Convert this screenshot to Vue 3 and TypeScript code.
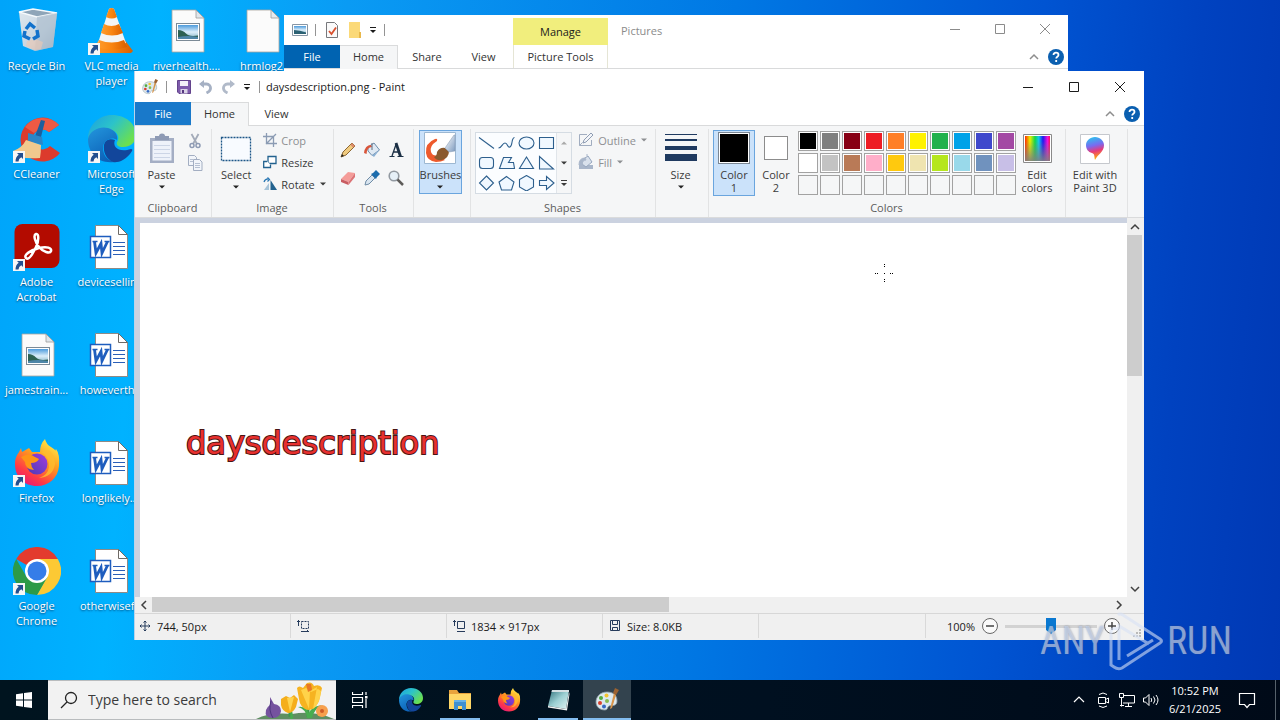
<script setup lang="ts">
import { ref } from 'vue'

interface DesktopItem {
  label: string
  icon: string
  shortcut?: boolean
}

const desktopColumns: DesktopItem[][] = [
  [
    { label: 'Recycle Bin', icon: 'bin' },
    { label: 'CCleaner', icon: 'ccleaner', shortcut: true },
    { label: 'Adobe Acrobat', icon: 'acrobat', shortcut: true },
    { label: 'jamestrain...', icon: 'picture-file' },
    { label: 'Firefox', icon: 'firefox', shortcut: true },
    { label: 'Google Chrome', icon: 'chrome', shortcut: true },
  ],
  [
    { label: 'VLC media player', icon: 'vlc', shortcut: true },
    { label: 'Microsoft Edge', icon: 'edge', shortcut: true },
    { label: 'devicesellin...', icon: 'word-file' },
    { label: 'howeverth...', icon: 'word-file' },
    { label: 'longlikely....', icon: 'word-file' },
    { label: 'otherwisef...', icon: 'word-file' },
  ],
  [{ label: 'riverhealth....', icon: 'picture-file' }],
  [{ label: 'hrmlog2', icon: 'blank-file' }],
]

const palette: string[] = [
  '#000000', '#7f7f7f', '#880015', '#ed1c24', '#ff7f27', '#fff200', '#22b14c', '#00a2e8', '#3f48cc', '#a349a4',
  '#ffffff', '#c3c3c3', '#b97a57', '#ffaec9', '#ffc90e', '#efe4b0', '#b5e61d', '#99d9ea', '#7092be', '#c8bfe7',
  '', '', '', '', '', '', '', '', '', '',
]

const shapes = [
  { name: 'Line', d: 'M2 2.5 17 13.5' },
  { name: 'Curve', d: 'M1.5 13C5 13 5 8 8 8s2 5 5 4c3-1.5 1-9 4.5-9.5' },
  { name: 'Oval', d: 'M2 8a7.5 6 0 1 0 15 0a7.5 6 0 1 0-15 0z' },
  { name: 'Rectangle', d: 'M2.5 2.5h14v11h-14z' },
  { name: 'Rounded rectangle', d: 'M5.5 2.5h8q3 0 3 3v5q0 3-3 3h-8q-3 0-3-3v-5q0-3 3-3z' },
  { name: 'Polygon', d: 'M6.5 2.5h8l-3 5h5l1 6h-15z' },
  { name: 'Triangle', d: 'M9.5 2 16.5 13.5h-14z' },
  { name: 'Right triangle', d: 'M2.5 1.5v12.5h14z' },
  { name: 'Diamond', d: 'M9.5 1 16.5 8l-7 7-7-7z' },
  { name: 'Pentagon', d: 'M9.5 1.5l7.5 5.5-2.5 8h-10L2 7z' },
  { name: 'Hexagon', d: 'M9.5.5l7 4v7.5l-7 4-7-4V4.5z' },
  { name: 'Right arrow', d: 'M2.5 5.5h7v-4l7.5 6.5-7.5 6.5v-4h-7z' },
]

const tools = ['Pencil', 'Fill with color', 'Text', 'Eraser', 'Color picker', 'Magnifier']

const pinned = [
  { name: 'Microsoft Edge', icon: 'edge', state: '' },
  { name: 'File Explorer', icon: 'folder', state: 'open' },
  { name: 'Firefox', icon: 'firefox', state: '' },
  { name: 'Notepad', icon: 'notepad', state: 'open' },
  { name: 'Paint', icon: 'paint', state: 'open active' },
]

const zoom = ref(50)
const search = ref('')
</script>

<template>
  <div class="screen">
    <svg class="sprite" aria-hidden="true">
      <defs>
        <linearGradient id="g-edge1" x1="0" y1="0" x2="1" y2="0.6">
          <stop offset="0" stop-color="#1c9fe2" /><stop offset="0.5" stop-color="#2cc3c9" /><stop offset="1" stop-color="#6be04f" />
        </linearGradient>
        <linearGradient id="g-edge2" x1="0" y1="0" x2="0.5" y2="1">
          <stop offset="0" stop-color="#2396dd" /><stop offset="1" stop-color="#0d62b8" />
        </linearGradient>
        <linearGradient id="g-fox" x1="0.8" y1="0" x2="0.2" y2="1">
          <stop offset="0" stop-color="#fff04a" /><stop offset="0.4" stop-color="#ff9a1f" /><stop offset="0.75" stop-color="#ff3a46" /><stop offset="1" stop-color="#e3147f" />
        </linearGradient>
        <linearGradient id="g-foxglobe" x1="0" y1="1" x2="1" y2="0">
          <stop offset="0" stop-color="#4a3bb5" /><stop offset="1" stop-color="#a13be0" />
        </linearGradient>
        <linearGradient id="g-sky" x1="0" y1="0" x2="0" y2="1">
          <stop offset="0" stop-color="#4d9bdc" /><stop offset="0.5" stop-color="#dceefa" /><stop offset="1" stop-color="#7fb0c4" />
        </linearGradient>
        <linearGradient id="g-bin" x1="0" y1="0" x2="1" y2="1">
          <stop offset="0" stop-color="#dfe8ef" /><stop offset="0.6" stop-color="#c6d4e0" /><stop offset="1" stop-color="#93a6b8" />
        </linearGradient>
        <linearGradient id="g-cone" x1="0" y1="0" x2="1" y2="0">
          <stop offset="0" stop-color="#ff9d2e" /><stop offset="0.5" stop-color="#f98410" /><stop offset="1" stop-color="#d95f00" />
        </linearGradient>
        <linearGradient id="g-rainbow" x1="0" y1="0" x2="1" y2="0">
          <stop offset="0" stop-color="#ff2a00" /><stop offset="0.2" stop-color="#e8f000" /><stop offset="0.4" stop-color="#12d44a" />
          <stop offset="0.55" stop-color="#10c8f0" /><stop offset="0.72" stop-color="#2018f0" /><stop offset="0.9" stop-color="#f010d8" /><stop offset="1" stop-color="#ff1050" />
        </linearGradient>
        <linearGradient id="g-grayfade" x1="0" y1="0" x2="0" y2="1">
          <stop offset="0.2" stop-color="#808080" stop-opacity="0" /><stop offset="1" stop-color="#808080" stop-opacity="0.9" />
        </linearGradient>
        <linearGradient id="g-p3d" x1="0.2" y1="0" x2="0.4" y2="1">
          <stop offset="0" stop-color="#27c7ef" /><stop offset="0.4" stop-color="#7a6af0" /><stop offset="0.65" stop-color="#e83a78" /><stop offset="1" stop-color="#ffb300" />
        </linearGradient>
        <linearGradient id="g-brush" x1="0" y1="0" x2="1" y2="1">
          <stop offset="0" stop-color="#ffffff" /><stop offset="1" stop-color="#7f9cc0" />
        </linearGradient>
        <linearGradient id="g-note" x1="0" y1="0" x2="1" y2="1">
          <stop offset="0" stop-color="#2f6f7a" /><stop offset="0.5" stop-color="#9ccfd3" /><stop offset="1" stop-color="#e4f3f3" />
        </linearGradient>
      </defs>

      <symbol id="bin" viewBox="0 0 48 48">
        <path d="M6 5 20 2 44 6 40 40 22 44 10 39z" fill="url(#g-bin)" />
        <path d="M6 5 20 2 44 6 24 10z" fill="#8fa5b8" stroke="#f5f9fc" stroke-width="1.5" />
        <path d="M24 10 22 44 40 40 44 6z" fill="#aebfce" fill-opacity="0.7" />
        <path d="M14 34l8-2 8 3-2 7-6 1-9-4z" fill="#f0c8b0" fill-opacity="0.6" />
        <g fill="none" stroke="#1272cc" stroke-width="3.5">
          <path d="M13 22l4-5 5 4" /><path d="M24 23l1 6-5 3" /><path d="M17 32l-6-3 1-5" />
        </g>
      </symbol>

      <symbol id="ccleaner" viewBox="0 0 48 48">
        <path d="M46 10A22 22 0 1 0 47 38L37 31A10 10 0 1 1 36 17z" fill="#dc3b2c" />
        <path d="M46 10A22 22 0 0 0 12 12l9 6a11 11 0 0 1 15-1z" fill="#ee5a44" />
        <path d="M28 5l4 1-5 20-6-2z" fill="#1d5f9e" />
        <path d="M15 18l14 4 1 8-15-4z" fill="#2c86c7" />
        <path d="M13 25l15 5q0 8-1 13Q6 45 0 36q9-3 13-11z" fill="#f1c98e" />
      </symbol>

      <symbol id="acrobat" viewBox="0 0 48 48">
        <rect x="1.5" y="1" width="45" height="44" rx="8" fill="#b30b00" />
        <path d="M13 35c-3-3 5-8 13-10s13 0 12 3-8 1-12-4-6-12-3-13 3 7 0 13-7 14-10 11z" fill="none" stroke="#fff" stroke-width="2.5" />
      </symbol>

      <symbol id="picture-file" viewBox="0 -1 48 48">
        <path d="M9 2h24l8 8v34H9z" fill="#fbfbfb" stroke="#aaa49e" stroke-width="0.8" />
        <path d="M33 2v8h8z" fill="#dfe6ec" stroke="#9c9c9c" stroke-width="0.8" />
        <rect x="13.5" y="15.5" width="23" height="17" fill="#fff" stroke="#7c8a96" />
        <rect x="15" y="17" width="20" height="14" fill="url(#g-sky)" />
        <path d="M15 22q5 0 8 3.5t12 2V31H15z" fill="#2d6152" />
        <path d="M15 29q10-2 20 0v2H15z" fill="#4e86a8" />
      </symbol>

      <symbol id="blank-file" viewBox="0 -1 48 48">
        <path d="M9 2h24l8 8v34H9z" fill="#fbfbfb" stroke="#aaa49e" stroke-width="0.8" />
        <path d="M33 2v8h8z" fill="#e8eaec" stroke="#9c9c9c" stroke-width="0.8" />
      </symbol>

      <symbol id="word-file" viewBox="1 -1 48 48">
        <path d="M8.5 1.5h23l9 9v34h-32z" fill="#fff" stroke="#8e8a86" />
        <path d="M31.5 1.5v9h9z" fill="#fff" stroke="#6e6a66" />
        <path d="M26 18.5h12M26 22.5h12M26 26.5h12M26 30.5h12" stroke="#2b5fb8" />
        <rect x="3.5" y="12.5" width="20" height="21" fill="#fff" stroke="#1e5dbe" stroke-width="1.5" />
        <path d="M7.5 17.5 9 29l5-9.5L15 29l5.5-11.5" fill="none" stroke="#1e5dbe" stroke-width="2.8" />
        <path d="M5.5 17.5h5M17.5 17.5h5" stroke="#1e5dbe" stroke-width="1.5" />
      </symbol>

      <symbol id="firefox" viewBox="0 0 48 48">
        <path d="M24 47C11 47 2 38 2 25c0-6 2-9 4-12l2-4 1 4 7-4 3 4 8 0q0-8 5-13 1 5 6 8t4 4l1-2q4 5 3 17C45 39 36 47 24 47z" fill="url(#g-fox)" />
        <circle cx="24" cy="25" r="10.5" fill="url(#g-foxglobe)" />
        <path d="M8 18q8-5 14 0l4 2q-2 4-8 4 0 4 3 7-9-1-9-8z" fill="#ff9416" />
        <path d="M28 13q9 5 8 15-1 8-10 11 14-1 16-14 0-9-6-14z" fill="#ffbd2e" fill-opacity="0.8" />
      </symbol>

      <symbol id="chrome" viewBox="0 0 48 48">
        <path d="M24 24 3.2 12A24 24 0 0 1 44.8 12z" fill="#e33b2e" />
        <path d="M24 24V12h20.8A24 24 0 0 1 24 48l10-18z" fill="#fcc934" />
        <path d="M24 24 34.4 30 24 48A24 24 0 0 1 3.2 12L13.6 30z" fill="#2c9a48" />
        <circle cx="24" cy="24" r="12" fill="#fff" />
        <circle cx="24" cy="24" r="9.5" fill="#357de8" />
      </symbol>

      <symbol id="vlc" viewBox="0 0 48 48">
        <path d="M12 32h24l9 12-2 2H5L3 44z" fill="url(#g-cone)" />
        <path d="M21 2q2.5-2 5 0l12 34q-14 7-28 0z" fill="#f4f4f4" />
        <path d="M21 2q2.5-2 5 0l3 8q-5 3-11 0zM16 17q7.5 4 15 0l4 9q-11 5-22 0z" fill="url(#g-cone)" />
        <path d="M11 33q13 5 25 0l3 7q-15 5-30 0z" fill="url(#g-cone)" />
      </symbol>

      <symbol id="edge" viewBox="0 0 48 48">
        <path d="M0 24C0 10 11 0 24 0c14 0 24 9 24 20 0 8-6 12-13 12-5 0-7-2-6-5 3-4 1-11-7-12C12 13 3 18 0 24z" fill="url(#g-edge1)" />
        <path d="M0 24C2 15 12 11 20 13c7 2 10 7 9 12-5-4-14 0-14 8 0 7 4 12 11 14C10 49 0 38 0 24z" fill="url(#g-edge2)" />
        <path d="M16 30c1-5 6-7 11-5-3 7 4 13 16 9q2 0 1 2c-6 10-15 12-19 11-7-3-10-10-9-17z" fill="#12469b" />
      </symbol>

      <symbol id="folder" viewBox="0 0 24 24">
        <path d="M1 2h8l2 3h12v16H1z" fill="#e8a33d" />
        <path d="M1 6h22v15H1z" fill="#ffd767" />
        <path d="M6 13h12v9h-4v-4h-4v4H6z" fill="#3f8fd0" />
        <path d="M6 12h12v2H6z" fill="#66b1e8" />
      </symbol>

      <symbol id="notepad" viewBox="0 0 24 24">
        <path d="M6 2h17l-3 19-18-3z" fill="url(#g-note)" />
        <path d="M6 2h17v2H5.5z" fill="#d6e0e4" />
        <path d="M2 18l18 3 3-17 .5 2L21 22.5 2 19.5z" fill="#f2f2f2" />
      </symbol>

      <symbol id="paint" viewBox="0 0 24 24">
        <path d="M12 4C5 4 1 9 1 14s4 8 9 8c3 0 2-3 4-4s8 1 8-5-4-9-10-9z" fill="#dce9ee" stroke="#8d9ea8" stroke-width="0.8" />
        <circle cx="6" cy="10" r="2" fill="#53a93f" /><circle cx="11.5" cy="7.5" r="2" fill="#f4c430" />
        <circle cx="5" cy="15" r="2" fill="#d9412f" /><circle cx="9" cy="18.5" r="2" fill="#3568c4" /><circle cx="12" cy="13" r="2" fill="#87bb4f" />
        <path d="M19 5 21 7 17 20 15 21z" fill="#d8944a" />
        <path d="M18 5 20 0 24 2 21 7z" fill="#9b6231" />
      </symbol>

      <symbol id="help" viewBox="0 0 16 16">
        <circle cx="8" cy="8" r="8" fill="#0a5fb0" />
        <path d="M5.5 6C5.5 2.8 10.5 3 10.5 6c0 1.8-2.3 1.8-2.3 3.5" fill="none" stroke="#fff" stroke-width="1.8" />
        <rect x="7.3" y="11" width="1.8" height="2" fill="#fff" />
      </symbol>

      <symbol id="customize" viewBox="0 0 8 8">
        <path d="M1 1.5h6" stroke="currentColor" /><path d="M1 4h6L4 7z" fill="currentColor" />
      </symbol>
      <symbol id="caret" viewBox="0 0 8 8"><path d="M1 2.5h6L4 5.5z" fill="currentColor" /></symbol>
      <symbol id="min" viewBox="0 0 10 10"><path d="M0 5.5h10" stroke="currentColor" /></symbol>
      <symbol id="max" viewBox="0 0 10 10"><path d="M.5.5h9v9h-9z" fill="none" stroke="currentColor" /></symbol>
      <symbol id="close" viewBox="0 0 10 10"><path d="M0 0 10 10M10 0 0 10" stroke="currentColor" /></symbol>
      <symbol id="chevron" viewBox="0 0 10 10"><path d="M1 7l4-4 4 4" fill="none" stroke="currentColor" stroke-width="1.5" /></symbol>
    </svg>

    <main class="desktop">
      <div class="icons">
        <div v-for="(column, c) in desktopColumns" :key="c" class="icon-column">
          <button v-for="item in column" :key="item.label" class="desktop-item" type="button">
            <span class="icon-box">
              <svg class="icon48"><use :href="'#' + item.icon" /></svg>
              <svg v-if="item.shortcut" class="shortcut" viewBox="0 0 12 12">
                <path d="M0 0h12v12H0z" fill="#f6f6f6" />
                <path d="M4 2h6v6L8.3 6.3Q5.5 7.5 5.5 10.5H2.5Q2.5 6 5.7 3.7z" fill="#244f8f" />
              </svg>
            </span>
            <span class="item-label">{{ item.label }}</span>
          </button>
        </div>
      </div>

      <section class="window explorer">
        <header class="titlebar">
          <div class="quick">
            <svg class="icon16" viewBox="0 0 16 16">
              <path d="M.5 2.5h15v11H.5z" fill="#fff" stroke="#8796a5" /><path d="M2 4h12v8H2z" fill="url(#g-sky)" /><path d="M2 8q6 0 12 2.5V12H2z" fill="#2b6173" />
            </svg>
            <i class="bar"></i>
            <svg class="icon16" viewBox="0 0 16 16">
              <path d="M3.5.5h8l3 3v12h-11z" fill="#fafafa" stroke="#77787c" /><path d="M6 9l2.5 3L13 5.5" fill="none" stroke="#d8502e" stroke-width="1.8" />
            </svg>
            <svg class="icon16" viewBox="0 0 16 16">
              <path d="M3 0h11v10h1v6H3z" fill="#fbd978" /><path d="M13 10h2v6h-2z" fill="#e9b84a" />
            </svg>
            <svg class="icon8"><use href="#customize" /></svg>
            <i class="bar"></i>
          </div>
          <span class="manage">Manage</span>
          <span class="title faded">Pictures</span>
          <div class="controls faded">
            <button type="button" aria-label="Minimize Pictures"><svg><use href="#min" /></svg></button>
            <button type="button" aria-label="Maximize Pictures"><svg><use href="#max" /></svg></button>
            <button type="button" aria-label="Close Pictures"><svg><use href="#close" /></svg></button>
          </div>
        </header>
        <nav class="tabs">
          <button class="tab file" type="button">File</button>
          <button class="tab current" type="button">Home</button>
          <button class="tab" type="button">Share</button>
          <button class="tab narrow" type="button">View</button>
          <button class="tab picture-tools" type="button">Picture Tools</button>
          <span class="tab-end">
            <svg class="icon10"><use href="#chevron" /></svg>
            <svg class="icon16"><use href="#help" /></svg>
          </span>
        </nav>
      </section>

      <section class="window paint">
        <header class="titlebar">
          <div class="quick">
            <svg class="icon16"><use href="#paint" /></svg>
            <i class="bar wide"></i>
            <svg class="icon14" viewBox="0 0 14 14">
              <path d="M.5.5h13v13H2L.5 12z" fill="#7e5bab" stroke="#63438c" /><path d="M3 1h8v5H3z" fill="#f3f0f8" /><path d="M3.5 9h7v4.5h-7z" fill="#d9d2e6" /><path d="M5 10h2v3H5z" fill="#563880" />
            </svg>
            <svg class="icon14" viewBox="0 0 14 14"><path d="M2 4h5.5a4 4 0 0 1 4 4.5q0 2.5-4 4.5" fill="none" stroke="#a6b1c4" stroke-width="2.8" /><path d="M0 4l5-4v8z" fill="#a6b1c4" /></svg>
            <svg class="icon14" viewBox="0 0 14 14"><path d="M12 4H6.5a4 4 0 0 0-4 4.5q0 2.5 4 4.5" fill="none" stroke="#b1bac9" stroke-width="2.8" /><path d="M14 4 9 0v8z" fill="#b1bac9" /></svg>
            <svg class="icon8"><use href="#customize" /></svg>
            <i class="bar"></i>
          </div>
          <h1 class="title">daysdescription.png - Paint</h1>
          <div class="controls">
            <button type="button" aria-label="Minimize"><svg><use href="#min" /></svg></button>
            <button type="button" aria-label="Maximize"><svg><use href="#max" /></svg></button>
            <button type="button" aria-label="Close"><svg><use href="#close" /></svg></button>
          </div>
        </header>
        <nav class="tabs">
          <button class="tab file" type="button">File</button>
          <button class="tab current" type="button">Home</button>
          <button class="tab narrow" type="button">View</button>
          <span class="tab-end">
            <svg class="icon10"><use href="#chevron" /></svg>
            <svg class="icon16"><use href="#help" /></svg>
          </span>
        </nav>

        <div class="ribbon">
          <div class="group clipboard">
            <div class="group-body">
              <button class="big" type="button">
                <svg class="icon32" viewBox="0 0 32 32">
                  <path d="M4 6h24v25H4z" fill="#a4aec4" /><path d="M6.5 9h19v19.5h-19z" fill="#eef2fa" />
                  <path d="M9 4h4q0-2.5 3-2.5T19 4h4v4H9z" fill="#8e9ab4" /><path d="M8 13.5h16M8 17.5h16M8 21.5h16M8 25.5h16" stroke="#ccd5e6" />
                </svg>
                <span>Paste</span>
                <svg class="icon8"><use href="#caret" /></svg>
              </button>
              <div class="mini-column">
                <button type="button" aria-label="Cut">
                  <svg class="icon16" viewBox="0 0 16 16"><path d="M4.5 1 10 11M11.5 1 6 11" stroke="#a3abb9" stroke-width="1.8" /><circle cx="5" cy="12.5" r="2" fill="none" stroke="#8e9bb4" stroke-width="1.5" /><circle cx="11" cy="12.5" r="2" fill="none" stroke="#8e9bb4" stroke-width="1.5" /></svg>
                </button>
                <button type="button" aria-label="Copy">
                  <svg class="icon16" viewBox="0 0 16 16"><path d="M1.5.5h6l2 2v8h-8z" fill="#f2f5fa" stroke="#a3aec2" /><path d="M6.5 4.5h6l2.5 2.5v8.5H6.5z" fill="#f2f5fa" stroke="#a3aec2" /><path d="M3 4.5h3M3 6.5h3M8 8.5h5M8 10.5h5M8 12.5h5" stroke="#b6c0d2" /></svg>
                </button>
              </div>
            </div>
            <span class="group-label">Clipboard</span>
          </div>

          <div class="group image">
            <div class="group-body">
              <button class="big" type="button">
                <svg class="icon32" viewBox="0 0 32 32"><rect x="1.5" y="5.5" width="29" height="23" fill="#f8fbff" stroke="#1d5687" stroke-width="1.3" stroke-dasharray="2 1" /></svg>
                <span>Select</span>
                <svg class="icon8"><use href="#caret" /></svg>
              </button>
              <div class="row-column">
                <button class="row muted" type="button">
                  <svg class="icon14" viewBox="0 0 14 14"><path d="M3.5 0v10.5H14M0 3.5h10.5V14M3 11 13 1" fill="none" stroke="#8b9bb3" stroke-width="1.3" /></svg>
                  Crop
                </button>
                <button class="row" type="button">
                  <svg class="icon14" viewBox="0 0 14 14"><path d="M5 1.5h8v7H5z" fill="#fff" stroke="#22628f" stroke-width="1.3" /><path d="M4 6.5H.7v6h6.8V9.5" fill="#fff" stroke="#22628f" stroke-width="1.3" /></svg>
                  Resize
                </button>
                <button class="row" type="button">
                  <svg class="icon14" viewBox="0 0 14 14"><path d="M7.5 3v10H14z" fill="#22628f" /><path d="M6 6v7H1z" fill="#a7c4d9" /><path d="M1 5q1-3.5 5-3M4.5.5l2 2-2 2" fill="none" stroke="#2977b3" stroke-width="1.2" /></svg>
                  Rotate
                  <svg class="icon8"><use href="#caret" /></svg>
                </button>
              </div>
            </div>
            <span class="group-label">Image</span>
          </div>

          <div class="group tools">
            <div class="group-body tool-grid">
              <button v-for="(tool, i) in tools" :key="tool" type="button" :aria-label="tool">
                <svg class="icon16" viewBox="0 0 16 16">
                  <g v-if="i === 0"><path d="M1 15l2-5L12 1l3 3-9 9z" fill="#f0cb80" stroke="#8d6833" /><path d="M1 15l1-3 2 2z" fill="#222" /><path d="M12 1l3 3-2 1.5L10.5 3z" fill="#dc8a6b" /></g>
                  <g v-else-if="i === 1"><path d="M4 5l6-4 5.5 7L8 13.5 4 9z" fill="#dfe9f3" stroke="#6d8cab" /><path d="M8 13.5 15.5 8 10 15z" fill="#8cb1d5" /><path d="M0 11Q1 3 7 3L8 5Q3 5 2.5 12z" fill="#d9553a" /><path d="M8 8V1" stroke="#5e6f80" /></g>
                  <g v-else-if="i === 2"><path d="M8.5 1 4 14M5.5 10h6" fill="none" stroke="#1b2f45" stroke-width="1.3" /><path d="M8 1l4.5 13.5" stroke="#1b2f45" stroke-width="2.8" /><path d="M1.5 14.5h5M9.5 14.5h6" stroke="#1b2f45" stroke-width="1.2" /></g>
                  <g v-else-if="i === 3"><path d="M1 9 8 2l7 1-6.5 9z" fill="#f49c99" /><path d="M1 9l7.5 3v3L1 12z" fill="#c95d62" /><path d="M8.5 12 15 3v4l-6.5 8z" fill="#dc7376" /></g>
                  <g v-else-if="i === 4"><path d="M1 15l1-4 6-6 3 3-6 6z" fill="#d9e5f0" stroke="#6f8ca6" /><path d="M7 4l2-1 3-3 4 4-3 3-1 2z" fill="#1d6dad" /></g>
                  <g v-else><circle cx="6" cy="6" r="4.8" fill="#e6f0f8" stroke="#9299a1" stroke-width="1.6" /><path d="M9.5 9.5 15 15" stroke="#5e5c5a" stroke-width="2.5" /></g>
                </svg>
              </button>
            </div>
            <span class="group-label">Tools</span>
          </div>

          <div class="group brushes">
            <div class="group-body">
              <button class="big chosen split" type="button">
                <svg class="icon32" viewBox="0 0 32 32">
                  <path d="M.5.5h31v31H.5z" fill="#fff" stroke="#9db8d2" />
                  <path d="M11 7Q14 6 13 9 5 14 7 20q2 5 8 3l6 5q-4 2-9 2Q3 29 2 21 1 11 11 7z" fill="#ee5a2c" />
                  <path d="M13 20q3-5 8-4l4 3q0 7-7 9-5 1-8-3 3-1 3-5z" fill="#8a5a2e" />
                  <path d="M21 16 30 3h1v16l-6 1z" fill="url(#g-brush)" stroke="#8097b0" stroke-width="0.5" />
                </svg>
                <span>Brushes</span>
                <svg class="icon8"><use href="#caret" /></svg>
              </button>
            </div>
          </div>

          <div class="group shapes">
            <div class="group-body">
              <div class="gallery">
                <div class="shape-grid">
                  <button v-for="shape in shapes" :key="shape.name" type="button" :aria-label="shape.name">
                    <svg viewBox="0 0 19 16"><path :d="shape.d" fill="#f0f8ff" stroke="#2d5f8d" stroke-width="1.1" /></svg>
                  </button>
                </div>
                <div class="gallery-nav">
                  <button type="button" class="dim" aria-label="Scroll shapes up"><svg class="icon8" viewBox="0 0 8 8"><path d="M1 5.5h6L4 2.5z" fill="currentColor" /></svg></button>
                  <button type="button" aria-label="Scroll shapes down"><svg class="icon8"><use href="#caret" /></svg></button>
                  <button type="button" aria-label="More shapes"><svg class="icon8"><use href="#customize" /></svg></button>
                </div>
              </div>
              <div class="row-column">
                <button class="row muted" type="button">
                  <svg class="icon16" viewBox="0 0 16 16"><path d="M9 2.5H1.5v11h12V8M1.5 13.5l3-3" fill="none" stroke="#a1adc0" /><path d="M5 11l1-3 7-7 2 2-7 7z" fill="#f3f5f9" stroke="#8f9db3" /></svg>
                  Outline
                  <svg class="icon8"><use href="#caret" /></svg>
                </button>
                <button class="row muted" type="button">
                  <svg class="icon16" viewBox="0 0 16 16"><path d="M1 11h14v4H1z" fill="#a9b6ca" /><path d="M4 6l6-4 4 6-6 5-4-3z" fill="#d9e1ec" stroke="#96a6be" /><path d="M1 11Q1 4 7 4l1 2q-4 0-4 5zM9 2V0" fill="#a9b6ca" stroke="#a9b6ca" /></svg>
                  Fill
                  <svg class="icon8"><use href="#caret" /></svg>
                </button>
              </div>
            </div>
            <span class="group-label">Shapes</span>
          </div>

          <div class="group size">
            <div class="group-body">
              <button class="big" type="button">
                <svg class="icon32" viewBox="0 0 32 32"><path d="M0 2h32v1H0zM0 7h32v2H0zM0 14h32v4H0zM0 22h32v7H0z" fill="#1f3a60" /></svg>
                <span>Size</span>
                <svg class="icon8"><use href="#caret" /></svg>
              </button>
            </div>
          </div>

          <div class="group colors">
            <div class="group-body">
              <button class="big chosen color-pick" type="button"><span class="well first"></span><span>Color<br />1</span></button>
              <button class="big color-pick" type="button"><span class="well second"></span><span>Color<br />2</span></button>
              <div class="swatches">
                <button v-for="(color, i) in palette" :key="i" class="swatch" type="button" :aria-label="color || 'Empty custom color'">
                  <span :class="{ filled: color }" :style="{ backgroundColor: color || 'transparent' }"></span>
                </button>
              </div>
              <button class="big" type="button">
                <svg class="icon32" viewBox="0 0 32 32"><path d="M2.5 2.5h28v28h-28z" fill="#fff" stroke="#8a8a8a" /><path d="M4 4h25v25H4z" fill="url(#g-rainbow)" /><path d="M4 4h25v25H4z" fill="url(#g-grayfade)" /></svg>
                <span>Edit<br />colors</span>
              </button>
            </div>
            <span class="group-label">Colors</span>
          </div>

          <div class="group paint3d">
            <div class="group-body">
              <button class="big" type="button">
                <svg class="icon32" viewBox="0 0 32 32"><path d="M1.5 2.5h29v29h-29z" fill="#fff" stroke="#c5c8cd" /><path d="M16 5c5 0 9 4 9 8 0 7-6 9-9 15-1-4 0-6-3-7-4-1-6-4-6-8s4-8 9-8z" fill="url(#g-p3d)" /></svg>
                <span>Edit with<br />Paint 3D</span>
              </button>
            </div>
          </div>
        </div>

        <div class="workspace">
          <div class="canvas">
            <span class="drawn-text">daysdescription</span>
            <svg class="crosshair" viewBox="0 0 20 20"><path d="M0 9.5h4M9 9.5h1M15 9.5h4M9.5 0v4M9.5 15v4" stroke="#000" stroke-dasharray="1 1" /></svg>
          </div>
          <div class="scroll vertical">
            <button type="button" aria-label="Scroll up"><svg class="icon10"><use href="#chevron" /></svg></button>
            <div class="track"><div class="thumb"></div></div>
            <button type="button" aria-label="Scroll down"><svg class="icon10" viewBox="0 0 10 10"><path d="M1 3l4 4 4-4" fill="none" stroke="currentColor" stroke-width="1.5" /></svg></button>
          </div>
          <div class="scroll horizontal">
            <button type="button" aria-label="Scroll left"><svg class="icon10" viewBox="0 0 10 10"><path d="M7 1 3 5l4 4" fill="none" stroke="currentColor" stroke-width="1.5" /></svg></button>
            <div class="track"><div class="thumb"></div></div>
            <button type="button" aria-label="Scroll right"><svg class="icon10" viewBox="0 0 10 10"><path d="M3 1l4 4-4 4" fill="none" stroke="currentColor" stroke-width="1.5" /></svg></button>
          </div>
        </div>

        <footer class="status">
          <span class="cell">
            <svg class="icon12" viewBox="0 0 12 12"><path d="M6 1v10M1 6h10M4.5 2.5 6 1l1.5 1.5M4.5 9.5 6 11l1.5-1.5M2.5 4.5 1 6l1.5 1.5M9.5 4.5 11 6 9.5 7.5" fill="none" stroke="#273c5c" /></svg>
            744, 50px
          </span>
          <span class="cell">
            <svg class="icon12" viewBox="0 0 12 12"><path d="M1.5 0v6M0 2l1.5-1.5L3 2M4 11.5h8M10 10l1.5 1.5" fill="none" stroke="#273c5c" /><path d="M4.5 1.5h7v7h-7z" fill="none" stroke="#273c5c" stroke-dasharray="2 1" /></svg>
          </span>
          <span class="cell">
            <svg class="icon12" viewBox="0 0 12 12"><path d="M1.5 0v6M0 2l1.5-1.5L3 2M4 11.5h8M4.5 1.5h7v7h-7z" fill="none" stroke="#273c5c" /></svg>
            1834 × 917px
          </span>
          <span class="cell">
            <svg class="icon12" viewBox="0 0 12 12"><path d="M1.5.5h9v10h-9zM3.5.5v4h5v-4M3.5 10.5v-3h5v3" fill="none" stroke="#273c5c" /></svg>
            Size: 8.0KB
          </span>
          <div class="zoom">
            <label for="zoom">100%</label>
            <button type="button" aria-label="Zoom out"><svg class="icon16" viewBox="0 0 16 16"><circle cx="8" cy="8" r="7.5" fill="#fafafa" stroke="#686868" /><path d="M4 8h8" stroke="#444" stroke-width="1.5" /></svg></button>
            <input id="zoom" v-model="zoom" type="range" min="0" max="100" />
            <button type="button" aria-label="Zoom in"><svg class="icon16" viewBox="0 0 16 16"><circle cx="8" cy="8" r="7.5" fill="#fafafa" stroke="#686868" /><path d="M4 8h8M8 4v8" stroke="#444" stroke-width="1.5" /></svg></button>
            <svg class="icon10 grip" viewBox="0 0 10 10"><path d="M7 1h2v2H7zM7 4h2v2H7zM7 7h2v2H7zM4 4h2v2H4zM4 7h2v2H4zM1 7h2v2H1z" fill="#b9b9b9" /></svg>
          </div>
        </footer>
      </section>

      <div class="watermark">
        <span>ANY</span>
        <svg viewBox="0 0 58 62">
          <path d="M11 5Q13 3 16 5L53 29q3 2 0 4L15 58Q11 60 7 57L4 55V20M12 50V16L42 34M20 46 46 30M4 20q4-3 8 0" fill="none" stroke="currentColor" stroke-width="3" />
        </svg>
        <span>RUN</span>
      </div>
    </main>

    <footer class="taskbar">
      <button class="start" type="button" aria-label="Start"><svg class="icon16" viewBox="0 0 16 16"><path d="M0 2.2 7 1.2v6.3H0zM8 1 16 0v7.5H8zM0 8.5h7v6.3L0 13.8zM8 8.5h8V16L8 15z" fill="#fff" /></svg></button>
      <label class="search" for="search">
        <svg class="icon18" viewBox="0 0 18 18"><circle cx="11" cy="7" r="5.5" fill="none" stroke="#222" stroke-width="1.3" /><path d="M7 11 1 17" stroke="#222" stroke-width="1.3" /></svg>
        <input id="search" v-model="search" type="text" placeholder="Type here to search" />
        <svg class="flowers" viewBox="0 0 80 38">
          <path d="M0 38Q14 31 36 33q22-4 42 5z" fill="#5f8f62" />
          <path d="M52 36V20M34 36V24" stroke="#3f9a4c" stroke-width="3" />
          <path d="M34 38Q36 26 29 24q8 0 8 14zM52 37Q52 26 66 24 58 28 56 37zM51 37Q50 28 42 26q10-2 12 11z" fill="#48ad50" />
          <path d="M41 7q2-3 6 0l4-5q5-2 7 3 6-2 8 2l-3 13q-4 9-11 9-8-2-9-11z" fill="#f6b321" />
          <path d="M45 9l8 19 1-18 7-4-4 22q7-5 8-18l-3-2-7 3-5-4z" fill="#ffd34a" />
          <path d="M50 3h5l1 6-4 2z" fill="#e87825" />
          <path d="M25 18l5-3 4 2 4-3 4 4-2 8q-3 6-8 6-6-2-7-8z" fill="#f5ae1b" /><path d="M31 17l3 14 4-15z" fill="#ffd550" />
          <path d="M14 16l4 7q7 1 7 7-1 7-8 7-9 0-7-8 1-3 4-5z" fill="#75529f" /><path d="M15 20q-3 9 2 17" fill="none" stroke="#4d347c" />
          <circle cx="66" cy="30" r="6" fill="#f7a04d" /><circle cx="66" cy="30" r="2" fill="#cf5b25" />
        </svg>
      </label>
      <button class="task-view" type="button" aria-label="Task View"><svg class="icon16" viewBox="0 0 16 16"><path d="M.5 0v2.5h10V0M.5 5.5h10v5H.5zM.5 16v-2.5h10V16M14 0v3M14 7v9" fill="none" stroke="#fff" stroke-width="1.2" /><path d="M13 4h2.5v2.5H13z" fill="#fff" /></svg></button>
      <div class="apps">
        <button v-for="app in pinned" :key="app.name" type="button" :aria-label="app.name" :class="app.state">
          <svg class="icon24"><use :href="'#' + app.icon" /></svg>
        </button>
      </div>
      <div class="tray">
        <svg class="icon16" viewBox="0 0 16 16"><path d="M3 10l5-5 5 5" fill="none" stroke="#fff" stroke-width="1.2" /></svg>
        <svg class="icon16" viewBox="0 0 16 16"><path d="M3.5 5.5h7v6h-7zM10.5 7.5l3-1.5v5l-3-1.5M4 2.5q4-3 8 0M4 14q4 3 8 0" fill="none" stroke="#fff" /></svg>
        <svg class="icon16" viewBox="0 0 16 16"><path d="M5 3.5h10.5v7.5H4M6 14.5h7M9.5 11v3.5M.5 1.5h4v4h-4zM2.5 5.5v9M1 13.5h4" fill="none" stroke="#fff" /></svg>
        <svg class="icon16" viewBox="0 0 16 16"><path d="M.5 6h2l3.5-3.5v11L2.5 10h-2zM8 6q1.5 2 0 4M10.5 4.5q3 3.5 0 7M13 3q4 5 0 10" fill="none" stroke="#fff" /></svg>
        <time class="clock">10:52 PM<br />6/21/2025</time>
        <svg class="icon18 notice" viewBox="0 0 18 18"><path d="M1.5 2.5h15v11h-5l-2.5 3-2.5-3h-5z" fill="none" stroke="#fff" stroke-width="1.2" /></svg>
        <i class="peek"></i>
      </div>
    </footer>
  </div>
</template>

<style>
html,
body {
  margin: 0;
  overflow: hidden;
}
</style>

<style scoped>
* {
  box-sizing: border-box;
}
.screen {
  display: flex;
  flex-direction: column;
  height: 100vh;
  font-family: "Open Sans", "Noto Sans", sans-serif;
  font-size: 11px;
  line-height: 15px;
  color: #1b1b1b;
}
button {
  font: inherit;
  color: inherit;
  background: none;
  border: 0;
  padding: 0;
  margin: 0;
}
svg {
  display: block;
  flex: none;
}
.sprite {
  position: absolute;
  width: 0;
  height: 0;
}
.icon8 { width: 8px; height: 8px; }
.icon10 { width: 10px; height: 10px; }
.icon12 { width: 12px; height: 12px; }
.icon14 { width: 14px; height: 14px; }
.icon16 { width: 16px; height: 16px; }
.icon18 { width: 18px; height: 18px; }
.icon24 { width: 24px; height: 24px; }
.icon32 { width: 32px; height: 32px; }
.icon48 { width: 48px; height: 48px; }

.desktop {
  position: relative;
  flex: 1;
  min-height: 0;
  overflow: hidden;
  background: linear-gradient(95deg, #00a4fa 0%, #00b2ff 12%, #0a9bf4 26%, #0078e4 55%, #0054d2 78%, #0042c0 90%, #0038b4 100%);
}
.icons {
  display: flex;
  margin-left: -1px;
}
.icon-column {
  display: flex;
  flex-direction: column;
  width: 75px;
}
.desktop-item {
  display: flex;
  flex-direction: column;
  align-items: center;
  gap: 3px;
  height: 108px;
  padding-top: 7px;
  color: #fff;
}
.icon-box {
  position: relative;
}
.shortcut {
  position: absolute;
  left: 0;
  bottom: 0;
  width: 12px;
  height: 12px;
}
.item-label {
  max-width: 70px;
  text-shadow: 0 1px 2px rgba(0, 30, 70, 0.7);
}

.window {
  position: absolute;
  display: flex;
  flex-direction: column;
  background: #fff;
}
.explorer {
  inset: 15px 212px 120px 284px;
}
.paint {
  inset: 71px 136px 40px 134px;
  border-left: 1px solid #b9d3ea;
}
.titlebar {
  display: flex;
  align-items: center;
  flex: none;
  height: 31px;
}
.explorer .titlebar {
  height: 30px;
}
.quick {
  display: flex;
  align-items: center;
  gap: 8px;
  padding: 0 6px 0 7px;
}
.explorer .quick {
  gap: 7px;
  width: 229px;
  padding-left: 8px;
}
.bar {
  width: 1px;
  height: 12px;
  background: #949494;
}
.bar.wide {
  margin-right: 2px;
}
.title {
  margin: 0;
  font-size: 11px;
  font-weight: 400;
}
.faded {
  color: #8b8b8b;
}
.manage {
  align-self: flex-end;
  width: 95px;
  margin-right: 13px;
  height: 27px;
  line-height: 27px;
  text-align: center;
  background: #f1ee7d;
}
.controls {
  display: flex;
  margin-left: auto;
  padding-right: 1px;
}
.controls button {
  display: grid;
  place-items: center;
  width: 46px;
  height: 30px;
}
.controls svg {
  width: 10px;
  height: 10px;
}
.explorer .controls button {
  width: 45px;
  height: 28px;
}
.explorer .controls {
  align-self: flex-start;
}
.tabs {
  display: flex;
  flex: none;
  height: 24px;
  border-bottom: 1px solid #d9dadb;
}
.tab {
  width: 58px;
  color: #333;
}
.tab.narrow {
  width: 55px;
}
.tab.file {
  width: 56px;
  background: #1979ca;
  color: #fff;
}
.explorer .tab.file {
  background: #0063b1;
}
.tab.current {
  height: 24px;
  padding-bottom: 2px;
  background: #f5f6f7;
  border: 1px solid #dadbdc;
  border-width: 1px 1px 0 0;
}
.tab.picture-tools {
  width: 95px;
  margin-left: 2px;
  border: 1px solid #e5e5d5;
  border-width: 0 1px;
}
.tab-end {
  display: flex;
  align-items: center;
  gap: 9px;
  margin-left: auto;
  padding-right: 4px;
  color: #8d8d8d;
}

.ribbon {
  display: flex;
  flex: none;
  height: 92px;
  background: #f5f6f7;
  border-bottom: 1px solid #dadbdc;
  padding-top: 3px;
  color: #3b3b3b;
}
.group {
  display: flex;
  flex-direction: column;
  align-items: center;
  justify-content: space-between;
  flex: none;
  border-right: 1px solid #e2e3e4;
  padding: 0 1px 2px 0;
}
.group-body {
  display: flex;
  align-items: flex-start;
  justify-content: center;
  padding-right: 2px;
}
.group-label {
  color: #5c5c5c;
}
.clipboard { width: 77px; }
.image { width: 122px; }
.tools { width: 80px; }
.brushes { width: 57px; }
.shapes { width: 185px; }
.size { width: 53px; }
.colors { width: 357px; }
.paint3d { width: 62px; }
.big {
  display: flex;
  flex-direction: column;
  align-items: center;
  border: 1px solid transparent;
  min-width: 42px;
  height: 66px;
  margin-top: 1px;
  padding: 1px 0;
  line-height: 13px;
  white-space: nowrap;
}
.big > span:not(.well) {
  margin-top: 4px;
}
.big .icon8 {
  margin-top: 2px;
  color: #222;
}
.big.chosen {
  background: #cbe2fa;
  border-color: #6aa5de;
}
.big.split {
  height: 64px;
}
.mini-column {
  display: flex;
  flex-direction: column;
  gap: 6px;
  padding: 4px 0 0 4px;
}
.row-column {
  display: flex;
  flex-direction: column;
}
.row {
  display: flex;
  align-items: center;
  gap: 4px;
  height: 22px;
  padding: 0 0 0 6px;
}
.row.muted {
  color: #8d8f92;
}
.tool-grid {
  display: grid;
  grid-template-columns: repeat(3, 24px);
  grid-auto-rows: 28px;
  place-items: center;
  padding-top: 7px;
}
.gallery {
  display: flex;
  margin-top: 3px;
  border: 1px solid #d5dce3;
}
.shape-grid {
  display: grid;
  grid-template-columns: repeat(4, 20px);
  grid-auto-rows: 20px;
  background: #fbfdff;
}
.shape-grid button {
  display: grid;
  place-items: center;
}
.shape-grid svg {
  width: 19px;
  height: 16px;
}
.gallery-nav {
  display: grid;
  width: 15px;
  border-left: 1px solid #e0e5ea;
}
.gallery-nav button {
  display: grid;
  place-items: center;
}
.gallery-nav .dim {
  color: #a9a9a9;
}
.well {
  display: block;
  flex: none;
  width: 32px;
  height: 32px;
}
.well.first {
  background: #000;
  border: 1px solid #7b8794;
  box-shadow: inset 0 0 0 1px #fff;
}
.well.second {
  width: 24px;
  height: 24px;
  margin: 4px;
  background: #fff;
  border: 1px solid #8c8c8c;
}
.swatches {
  display: grid;
  grid-template-columns: repeat(10, 20px);
  grid-auto-rows: 20px;
  gap: 2px;
  margin: 2px 0 0 1px;
}
.swatch {
  border: 1px solid #a2a2a2;
  padding: 1px;
}
.swatch span {
  display: block;
  height: 100%;
}
.swatch:has(.filled) {
  background: #fff;
}

.workspace {
  display: grid;
  flex: 1;
  min-height: 0;
  grid-template: minmax(0, 1fr) 16px / minmax(0, 1fr) 17px;
  background: #f0f0f0;
}
.canvas {
  position: relative;
  background: #fff;
  border: 5px solid #cbd2e0;
  border-width: 5px 0 0 5px;
}
.drawn-text {
  position: absolute;
  left: 46px;
  top: 200px;
  font-family: "DejaVu Sans", sans-serif;
  font-size: 32px;
  line-height: 40px;
  color: #e8302e;
  -webkit-text-stroke: 2px #4a1414;
  paint-order: stroke fill;
}
.crosshair {
  position: absolute;
  left: 735px;
  top: 41px;
  width: 20px;
  height: 20px;
}
.scroll {
  display: flex;
  color: #404040;
}
.scroll button {
  display: grid;
  place-items: center;
  width: 17px;
  height: 16px;
}
.scroll .track {
  flex: 1;
}
.scroll .thumb {
  background: #cdcdcd;
}
.vertical {
  flex-direction: column;
}
.vertical button {
  width: 15px;
  height: 17px;
}
.vertical .thumb {
  width: 15px;
  height: 41%;
}
.horizontal .thumb {
  width: 54%;
  height: 15px;
}
.status {
  display: flex;
  flex: none;
  height: 27px;
  padding-bottom: 2px;
  border-top: 1px solid #d7d7d7;
  background: #f0f0f0;
}
.cell {
  display: flex;
  align-items: center;
  gap: 6px;
  width: 156px;
  padding: 0 4px 0 6px;
  border-right: 1px solid #d9d9d9;
}
.cell:first-child {
  padding-left: 4px;
}
.zoom {
  display: flex;
  align-items: center;
  gap: 7px;
  margin-left: auto;
  padding: 0 2px 0 21px;
  border-left: 1px solid #d9d9d9;
}
.zoom input {
  appearance: none;
  width: 92px;
  height: 18px;
  margin: 0;
  background: linear-gradient(#d2d2d2, #d2d2d2) center / 100% 3px no-repeat;
}
.zoom input::-webkit-slider-thumb {
  appearance: none;
  width: 10px;
  height: 16px;
  background: #0a78d1;
  clip-path: polygon(0 0, 100% 0, 100% 75%, 50% 100%, 0 75%);
}
.grip {
  align-self: flex-end;
  margin-left: 5px;
}
.watermark {
  position: absolute;
  right: 48px;
  bottom: 8px;
  display: flex;
  align-items: center;
  gap: 2px;
  font-family: "Roboto Condensed", "Open Sans Condensed", "Liberation Sans Narrow", "Roboto", sans-serif;
  font-size: 38px;
  font-weight: 400;
  line-height: 40px;
  color: rgba(215, 225, 245, 0.6);
  text-shadow: 0 0 2px rgba(60, 80, 120, 0.5);
  pointer-events: none;
}
.watermark svg {
  width: 58px;
  height: 62px;
}

.taskbar {
  display: flex;
  flex: none;
  height: 40px;
  background: linear-gradient(90deg, #00141f, #001020 60%, #000a18);
  color: #fff;
}
.taskbar button {
  display: grid;
  place-items: center;
  width: 48px;
}
.search {
  display: flex;
  align-items: center;
  width: 288px;
  padding-left: 12px;
  background: #f2f2f2;
  border: 1px solid #b9bcbe;
  border-width: 1px 0;
}
.search input {
  flex: 1;
  min-width: 0;
  margin-left: 10px;
  padding: 0;
  border: 0;
  background: none;
  font: 14px/20px "Open Sans", sans-serif;
  color: #333;
}
.search input::placeholder {
  color: #3b3b3b;
}
.flowers {
  align-self: flex-end;
  width: 80px;
  height: 38px;
}
.apps {
  display: flex;
  gap: 1px;
  margin-left: 3px;
}
.apps .open {
  position: relative;
}
.apps .open::after {
  content: "";
  position: absolute;
  left: 4px;
  right: 4px;
  bottom: 0;
  height: 2px;
  background: #83bdf0;
}
.apps .active {
  background: #33434e;
}
.apps .active::after {
  left: 0;
  right: 0;
}
.tray {
  display: flex;
  align-items: center;
  gap: 8px;
  margin-left: auto;
}
.clock {
  width: 56px;
  font-size: 11px;
  line-height: 18px;
  text-align: center;
}
.notice {
  margin-left: 7px;
}
.peek {
  width: 5px;
  height: 40px;
  margin-left: 11px;
  border-left: 1px solid #56616b;
}
</style>
